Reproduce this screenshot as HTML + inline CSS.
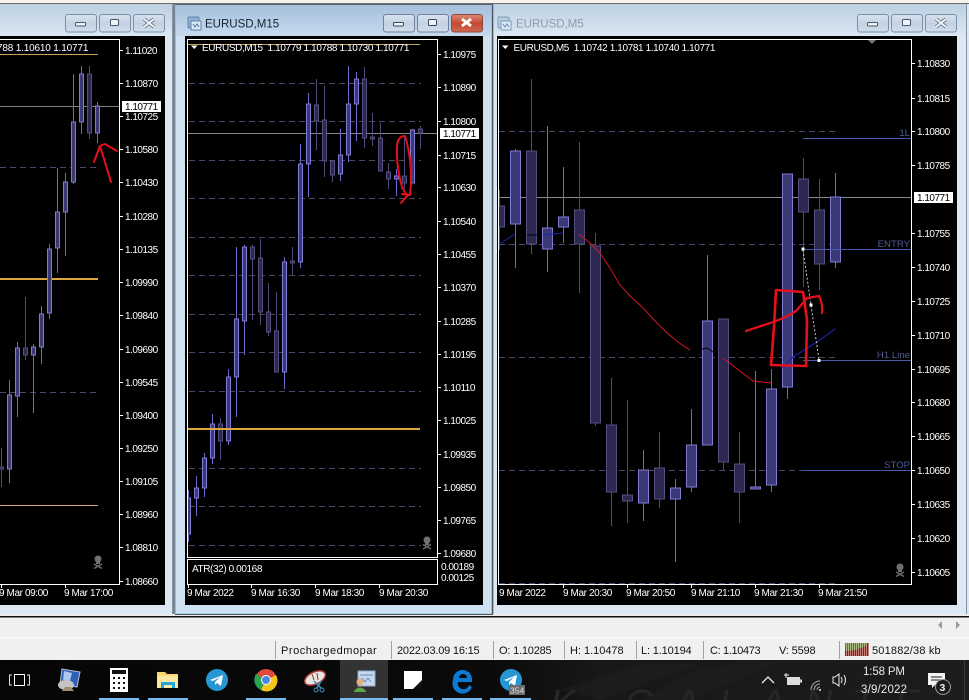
<!DOCTYPE html>
<html><head><meta charset="utf-8"><style>
html,body{margin:0;padding:0;background:#f0f0f0;overflow:hidden}
svg{display:block;font-family:"Liberation Sans",sans-serif}
.p{font-size:10px;fill:#fff;letter-spacing:-.5px}
.d{font-size:10px;fill:#fff;letter-spacing:-.4px}
.s{font-size:11px;fill:#111;letter-spacing:.35px}
.g{stroke:#4b4768;stroke-width:1;stroke-dasharray:6 4;fill:none}
.bw{stroke:#6e68cc;fill:none}.rw{stroke:#4f4a78;fill:none}
.bb{stroke:#7f7ad2;fill:#3b3876}.rb{stroke:#55507c;fill:#2c2852}
.w{stroke:#fff;fill:none}
.rd{stroke:#e80f1c;fill:none;stroke-linecap:round;stroke-linejoin:round}
</style></head><body>
<svg width="969" height="700" viewBox="0 0 969 700" xmlns="http://www.w3.org/2000/svg">
<defs>
<linearGradient id="ia" x1="0" y1="0" x2="0" y2="1"><stop offset="0" stop-color="#bccfe2"/><stop offset="1" stop-color="#dbe7f3"/></linearGradient>
<linearGradient id="ac" x1="0" y1="0" x2="0" y2="1"><stop offset="0" stop-color="#a5bfdb"/><stop offset="1" stop-color="#c6daee"/></linearGradient>
<linearGradient id="bt" x1="0" y1="0" x2="0" y2="1"><stop offset="0" stop-color="#d8e3ef"/><stop offset=".5" stop-color="#c3d2e2"/><stop offset="1" stop-color="#cfdeec"/></linearGradient>
<linearGradient id="cl" x1="0" y1="0" x2="0" y2="1"><stop offset="0" stop-color="#dd8a7c"/><stop offset=".5" stop-color="#c6482f"/><stop offset="1" stop-color="#cf6a54"/></linearGradient>
<linearGradient id="tb" x1="0" y1="0" x2="1" y2="0"><stop offset="0" stop-color="#060606"/><stop offset=".5" stop-color="#0a0a0a"/><stop offset=".62" stop-color="#181818"/><stop offset="1" stop-color="#1c1c1c"/></linearGradient>
<clipPath id="c3"><rect x="498" y="39" width="414" height="546"/></clipPath>
<clipPath id="c2"><rect x="187" y="39" width="251" height="519"/></clipPath>
<clipPath id="ct"><rect x="0" y="660" width="969" height="40"/></clipPath>
</defs>

<!-- top -->
<rect width="969" height="3" fill="#f6f3ee"/><rect y="3" width="969" height="1" fill="#6b6b6b"/>
<rect x="0" y="614" width="969" height="3" fill="#ececec"/>

<!-- window 1 -->
<rect x="0" y="4" width="172" height="610" fill="#dce8f4"/>
<rect x="0" y="4" width="172" height="32" fill="url(#ia)"/>
<rect x="0" y="36" width="165" height="569" fill="#000"/>
<path d="M172.500 4V614" stroke="#8795a3"/>
<g>
<rect x="65.500" y="14.500" width="31" height="17.500" rx="2.500" fill="url(#bt)" stroke="#7c90a6"/>
<rect x="99.500" y="14.500" width="31" height="17.500" rx="2.500" fill="url(#bt)" stroke="#7c90a6"/>
<rect x="133.500" y="14.500" width="31" height="17.500" rx="2.500" fill="url(#bt)" stroke="#7c90a6"/>
<rect x="75.500" y="22.500" width="10" height="3.500" rx="1" fill="#eef3f8" stroke="#4a5868"/>
<rect x="110.500" y="19.500" width="8" height="6" rx="1" fill="#eef3f8" stroke="#4a5868"/>
<path d="M144 19l10 8M154 19l-10 8" stroke="#5f6d7d" stroke-width="3.600"/><path d="M144 19l10 8M154 19l-10 8" stroke="#f4f7fa" stroke-width="2"/>
</g>
<path class="g" d="M0 167.500H98M0 392.500H98"/>
<path d="M0 54.500H98" stroke="#c9a15a"/><path d="M0 106.500H119" stroke="#808080"/>
<path d="M0 279H98" stroke="#d9a93e" stroke-width="2"/><path d="M0 505.500H98" stroke="#d9a57a"/>
<path class="bw" d="M73.500 74V184M81.500 66V134M97.500 102V143M65.500 173V256M57.500 168V273M49.500 244V319M41.500 306V364M33.500 344V413M17.500 342V417M9.500 380V483"/>
<path class="rw" d="M89.500 66V139M25.500 297V360M1.500 448V487"/>
<path class="bb" d="M71.500 122h4V182h-4zM79.500 74h4V122h-4zM95.500 106h4V133h-4zM63.500 182h4V212h-4zM55.500 212h4V248h-4zM47.500 249h4V313h-4zM39.500 314h4V347h-4zM31.500 347h4V355h-4zM15.500 348h4V396h-4zM7.500 395h4V469h-4z"/>
<path class="rb" d="M87.500 74h4V133h-4zM23.500 348h4V355h-4zM-.5 467h4V469h-4z"/>
<path class="rd" stroke-width="2" d="M94 162L100 146L111 182M100 146L105 144L110 147L117 151"/>
<path class="w" d="M0 39.500H119.500V584.500H0M1.500 585V588M65.500 585V588"/>
<path class="w" d="M120 50.500h3M120 83.500h3M120 116.500h3M120 149.500h3M120 182.500h3M120 216.500h3M120 249.500h3M120 282.500h3M120 315.500h3M120 349.500h3M120 382.500h3M120 415.500h3M120 448.500h3M120 481.500h3M120 514.500h3M120 547.500h3M120 581.500h3"/>
<g class="p">
<text x="125" y="54">1.11020</text><text x="125" y="87">1.10870</text><text x="125" y="120">1.10725</text><text x="125" y="153">1.10580</text><text x="125" y="186">1.10430</text><text x="125" y="220">1.10280</text><text x="125" y="253">1.10135</text><text x="125" y="286">1.09990</text><text x="125" y="319">1.09840</text><text x="125" y="353">1.09690</text><text x="125" y="386">1.09545</text><text x="125" y="419">1.09400</text><text x="125" y="452">1.09250</text><text x="125" y="485">1.09105</text><text x="125" y="518">1.08960</text><text x="125" y="551">1.08810</text><text x="125" y="585">1.08660</text>
</g>
<rect x="122" y="101" width="39" height="11" fill="#fff"/><text class="p" x="125" y="110" style="fill:#000">1.10771</text>
<text class="d" x="-3" y="51" textLength="91">788 1.10610 1.10771</text>
<text class="d" x="-1" y="596">9 Mar 09:00</text><text class="d" x="64" y="596">9 Mar 17:00</text>
<g fill="#707070"><circle cx="98" cy="559" r="3.500"/><rect x="96" y="561" width="4" height="3"/><path d="M94 564l8 4.500M102 564l-8 4.500" stroke="#707070" stroke-width="1.300"/></g>

<!-- window 3 -->
<rect x="493" y="4" width="476" height="610" fill="#dce8f4"/>
<rect x="493" y="4" width="474" height="32" fill="url(#ia)"/>
<path d="M966.500 4V614" stroke="#8795a3"/><path d="M493.500 4V614" stroke="#7fc0e0"/>
<rect x="497" y="36" width="460" height="569" fill="#000"/>
<g transform="translate(498,17)"><rect width="11" height="11" rx="1" fill="#b8cde2" stroke="#7f9cb8"/><rect x="3" y="4" width="10" height="9" fill="#dce8f3" stroke="#7f9cb8"/><path d="M5 7l2 3 2-3 2 3" stroke="#6f8fb0" fill="none"/></g>
<text x="516" y="27.500" style="font-size:11.500px;fill:#8d9cab">EURUSD,M5</text>
<g>
<rect x="857.500" y="14.500" width="31" height="17.500" rx="2.500" fill="url(#bt)" stroke="#7c90a6"/>
<rect x="891.500" y="14.500" width="31" height="17.500" rx="2.500" fill="url(#bt)" stroke="#7c90a6"/>
<rect x="925.500" y="14.500" width="31" height="17.500" rx="2.500" fill="url(#bt)" stroke="#7c90a6"/>
<rect x="867.500" y="22.500" width="10" height="3.500" rx="1" fill="#eef3f8" stroke="#4a5868"/>
<rect x="902.500" y="19.500" width="8" height="6" rx="1" fill="#eef3f8" stroke="#4a5868"/>
<path d="M936 19l10 8M946 19l-10 8" stroke="#5f6d7d" stroke-width="3.600"/><path d="M936 19l10 8M946 19l-10 8" stroke="#f4f7fa" stroke-width="2"/>
</g>
<g clip-path="url(#c3)">
<path class="g" d="M499 131.500H837M499 244.500H837M499 357.500H837M499 470.500H837M499 583.500H837"/>
<path d="M498 197.500H911" stroke="#8a8a8a"/>
<path class="bw" d="M515.500 149V268M547.500 126V272M563.500 167V243M643.500 450V521M675.500 479V562M691.500 409V492M707.500 255V445M755.500 371V489M771.500 369V492M787.500 174V399M835.500 173V268"/>
<path class="rw" d="M499.500 190V250M531.500 79V254M579.500 142V293M595.500 233V426M611.500 378V526M627.500 400V523M659.500 432V508M723.500 319V471M739.500 432V523M803.500 158V287M819.500 179V290"/>
<path class="bb" d="M510.500 151h10V224h-10zM542.500 228h10V249h-10zM558.500 217h10V227h-10zM638.500 470h10V503h-10zM670.500 488h10V499h-10zM686.500 445h10V487h-10zM702.500 321h10V445h-10zM750.500 487h10V489h-10zM766.500 389h10V485h-10zM782.500 174h10V387h-10zM830.500 197h10V262h-10z"/>
<path class="rb" d="M494.500 206h10V227h-10zM526.500 151h10V244h-10zM574.500 210h10V244h-10zM590.500 246h10V423h-10zM606.500 425h10V492h-10zM622.500 495h10V501h-10zM654.500 468h10V499h-10zM718.500 319h10V462h-10zM734.500 464h10V492h-10zM798.500 179h10V212h-10zM814.500 210h10V264h-10z"/>
<path d="M498 245L515 234" stroke="#1c22a8" fill="none"/><path d="M527 235H537" stroke="#000" fill="none"/><path d="M543 235L563 233" stroke="#1c22a8" fill="none"/>
<path d="M579 234L590 243L600 253L610 268L620 285L630 296L643 308L655 321L667 333L678 342L690 350" stroke="#d8142a" fill="none"/>
<path d="M702 349L707 348L713 352" stroke="#000" fill="none"/>
<path d="M723 358L753 381L771 383" stroke="#d8142a" fill="none"/>
<path d="M783 368L793 357L817 342L835 329" stroke="#1a20a8" fill="none" stroke-width="1.200"/>
<path d="M803 138.500H911M803 249.500H911M803 360.500H911M803 470.500H911" stroke="#4659ad" fill="none"/>
<path d="M803 250L811 305L819 360" stroke="#ccc" fill="none" stroke-dasharray="2 2"/>
<rect x="801.500" y="247.500" width="3" height="3" fill="#fff"/><rect x="809.500" y="303.500" width="3" height="3" fill="#fff"/><rect x="817.500" y="359" width="3" height="3" fill="#fff"/>
</g>
<g style="font-size:9.600px;fill:#4d5e98" text-anchor="end"><text x="910" y="136">1L</text><text x="910" y="247">ENTRY</text><text x="910" y="358">H1 Line</text><text x="910" y="468">STOP</text></g>
<path class="rd" stroke-width="2.600" d="M776 290L803 292L807 320L806 366L771 365L774 327Z"/>
<path class="rd" stroke-width="2.200" d="M746 331L773 322Q790 316 797 310L807 298L819 296Q823 304 822 313"/>
<path d="M868 40l4 4 4-4z" fill="#777"/>
<path class="w" d="M498.500 39.500H911.500V584.500H498.500Z"/>
<path class="w" d="M563.500 585V588M627.500 585V588M691.500 585V588M755.500 585V588M819.500 585V588M912 63.500h3M912 98.500h3M912 131.500h3M912 165.500h3M912 233.500h3M912 267.500h3M912 301.500h3M912 335.500h3M912 369.500h3M912 402.500h3M912 436.500h3M912 470.500h3M912 504.500h3M912 538.500h3M912 572.500h3"/>
<g class="p"><text x="917" y="67">1.10830</text><text x="917" y="102">1.10815</text><text x="917" y="135">1.10800</text><text x="917" y="169">1.10785</text><text x="917" y="237">1.10755</text><text x="917" y="271">1.10740</text><text x="917" y="305">1.10725</text><text x="917" y="339">1.10710</text><text x="917" y="373">1.10695</text><text x="917" y="406">1.10680</text><text x="917" y="440">1.10665</text><text x="917" y="474">1.10650</text><text x="917" y="508">1.10635</text><text x="917" y="542">1.10620</text><text x="917" y="576">1.10605</text></g>
<rect x="914" y="192" width="39" height="11" fill="#fff"/><text class="p" x="917" y="201" style="fill:#000">1.10771</text>
<path d="M502 45.500h6.500l-3.200 3.500z" fill="#fff"/>
<text class="d" x="513.500" y="51" textLength="201.500" xml:space="preserve">EURUSD,M5  1.10742 1.10781 1.10740 1.10771</text>
<g class="d"><text x="499" y="596">9 Mar 2022</text><text x="563" y="596">9 Mar 20:30</text><text x="626" y="596">9 Mar 20:50</text><text x="691" y="596">9 Mar 21:10</text><text x="754" y="596">9 Mar 21:30</text><text x="818" y="596">9 Mar 21:50</text></g>
<g fill="#707070"><circle cx="900" cy="567" r="3.500"/><rect x="898" y="569" width="4" height="3"/><path d="M896 572l8 4.500M904 572l-8 4.500" stroke="#707070" stroke-width="1.300"/></g>

<!-- window 2 -->
<rect x="173" y="4" width="2" height="610" fill="#77838e"/>
<rect x="175" y="5" width="317" height="609" fill="#cfe0f1"/>
<rect x="175" y="5" width="317" height="31" fill="url(#ac)"/>
<path d="M175.500 5V614H491.500V5" fill="none" stroke="#8cc6e6"/><path d="M175 4.500H492" stroke="#5a6570"/>
<path d="M492.500 4V614M175 614.500H493" fill="none" stroke="#4a555f"/>
<rect x="185" y="36" width="298" height="569" fill="#000"/>
<g transform="translate(188,17)"><rect width="11" height="11" rx="1" fill="#8fb0d0" stroke="#5f83a8"/><rect x="3" y="4" width="10" height="9" fill="#dce8f3" stroke="#5f83a8"/><path d="M5 7l2 3 2-3 2 3" stroke="#4f7aa5" fill="none"/></g>
<text x="205" y="27.500" style="font-size:11.500px;fill:#15222e">EURUSD,M15</text>
<g>
<rect x="383.500" y="14.500" width="31" height="17.500" rx="2.500" fill="url(#bt)" stroke="#6d8199"/>
<rect x="417.500" y="14.500" width="31" height="17.500" rx="2.500" fill="url(#bt)" stroke="#6d8199"/>
<rect x="451.500" y="14.500" width="31" height="17.500" rx="2.500" fill="url(#cl)" stroke="#8a4a40"/>
<rect x="393.500" y="22.500" width="10" height="3.500" rx="1" fill="#eef3f8" stroke="#3c4a5a"/>
<rect x="428.500" y="19.500" width="8" height="6" rx="1" fill="#eef3f8" stroke="#3c4a5a"/>
<path d="M462 19l9 7M471 19l-9 7" stroke="#fff" stroke-width="3"/>
</g>
<g clip-path="url(#c2)">
<path class="g" d="M189 83.500H421M189 121.500H421M189 160.500H421M189 198.500H421M189 237.500H421M189 275.500H421M189 314.500H421M189 352.500H421M189 391.500H421M189 468.500H421M189 506.500H421M189 545.500H421"/>
<path d="M188 133.500H437" stroke="#888"/>
<path d="M188 44.500H420" stroke="#c9a15a"/>
<path class="bw" d="M188.500 490V542M196.500 476V516M204.500 453V497M212.500 414V464M228.500 369V445M236.500 247V417M244.500 245V355M284.500 257V389M300.500 144V268M308.500 93V197M340.500 129V181M348.500 66V162M356.500 72V141M396.500 169V196M412.500 129V183"/>
<path class="rw" d="M220.500 418V460M252.500 245V320M260.500 239V325M268.500 283V336M276.500 292V372M292.500 247V275M316.500 79V150M324.500 86V177M332.500 160V182M364.500 67V148M372.500 113V146M380.500 123V171M388.500 163V189M404.500 136V189M420.500 126V149"/>
<path class="bb" d="M186.500 498h4V534h-4zM194.500 488h4V498h-4zM202.500 458h4V488h-4zM210.500 424h4V458h-4zM226.500 377h4V441h-4zM234.500 319h4V377h-4zM242.500 247h4V321h-4zM282.500 262h4V372h-4zM298.500 164h4V262h-4zM306.500 104h4V164h-4zM338.500 155h4V174h-4zM346.500 104h4V155h-4zM354.500 79h4V104h-4zM394.500 176h4V179h-4zM410.500 130h4V183h-4z"/>
<path class="rb" d="M218.500 424h4V441h-4zM250.500 247h4V259h-4zM258.500 258h4V312h-4zM266.500 312h4V332h-4zM274.500 331h4V372h-4zM290.500 261h4V263h-4zM314.500 105h4V121h-4zM322.500 120h4V161h-4zM330.500 161h4V175h-4zM362.500 79h4V138h-4zM370.500 137h4V139h-4zM378.500 138h4V171h-4zM386.500 172h4V179h-4zM402.500 176h4V183h-4zM418.500 129h4V133h-4z"/>
<path d="M188 429H420" stroke="#d9a93e" stroke-width="2"/>
</g>
<path class="rd" stroke-width="2" d="M405 136Q398 136 397 146Q396 165 402 187Q406 195 408 195L401 203M405 136Q408 145 410 160Q412 180 410 195L402 194"/>
<path class="w" d="M187.500 39.500H437.500V557.500H187.500ZM187.500 559.500H437.500V584.500H187.500Z"/>
<path class="w" d="M251.500 585V588M315.500 585V588M379.500 585V588M188.500 585V588M438 54.500h3M438 87.500h3M438 121.500h3M438 155.500h3M438 187.500h3M438 221.500h3M438 254.500h3M438 287.500h3M438 321.500h3M438 354.500h3M438 387.500h3M438 420.500h3M438 454.500h3M438 487.500h3M438 520.500h3M438 553.500h3"/>
<g class="p"><text x="443" y="58">1.10975</text><text x="443" y="91">1.10890</text><text x="443" y="125">1.10800</text><text x="443" y="159">1.10715</text><text x="443" y="191">1.10630</text><text x="443" y="225">1.10540</text><text x="443" y="258">1.10455</text><text x="443" y="291">1.10370</text><text x="443" y="325">1.10285</text><text x="443" y="358">1.10195</text><text x="443" y="391">1.10110</text><text x="443" y="424">1.10025</text><text x="443" y="458">1.09935</text><text x="443" y="491">1.09850</text><text x="443" y="524">1.09765</text><text x="443" y="557">1.09680</text><text x="441" y="570">0.00189</text><text x="441" y="581">0.00125</text></g>
<rect x="440" y="128" width="39" height="11" fill="#fff"/><text class="p" x="443" y="137" style="fill:#000">1.10771</text>
<path d="M191 45.500h6.500l-3.200 3.500z" fill="#fff"/>
<text class="d" x="202" y="51" textLength="207" xml:space="preserve">EURUSD,M15  1.10779 1.10788 1.10730 1.10771</text>
<text class="d" x="192" y="572" textLength="70">ATR(32) 0.00168</text>
<g class="d"><text x="187" y="596">9 Mar 2022</text><text x="251" y="596">9 Mar 16:30</text><text x="315" y="596">9 Mar 18:30</text><text x="379" y="596">9 Mar 20:30</text></g>
<g fill="#707070"><circle cx="427" cy="540" r="3.500"/><rect x="425" y="542" width="4" height="3"/><path d="M423 544.500l8 4.500M431 544.500l-8 4.500" stroke="#707070" stroke-width="1.300"/></g>

<!-- tabs and status bar -->
<rect x="0" y="616" width="969" height="1.500" fill="#111"/>
<rect x="0" y="617.500" width="969" height="22.500" fill="#f0f0f0"/>
<rect x="0" y="637" width="969" height="1" fill="#fafafa"/>
<rect x="0" y="638" width="969" height="22" fill="#f0f0f0"/>
<path d="M942 621l-4 4 4 4zM956 621l4 4-4 4z" fill="#9a9a9a"/>
<path d="M275.500 641V659M391.500 641V659M493.500 641V659M564.500 641V659M636.500 641V659M703.500 641V659M839.500 641V659" stroke="#a0a0a0"/>
<g class="s"><text x="281" y="654" textLength="96">Prochargedmopar</text><text x="397" y="654" textLength="83">2022.03.09 16:15</text><text x="499" y="654" textLength="53">O: 1.10285</text><text x="570" y="654" textLength="54">H: 1.10478</text><text x="641" y="654" textLength="51">L: 1.10194</text><text x="710" y="654" textLength="51">C: 1.10473</text><text x="779" y="654" textLength="37">V: 5598</text><text x="872" y="654" textLength="69">501882/38 kb</text></g>
<g stroke-width="1.500">
<path d="M845.750 656V651M847.750 656V651M849.750 656V651M851.750 656V650M853.750 656V650M855.750 656V650M857.750 656V649M859.750 656V648M861.750 656V648M863.750 656V647M865.750 656V646M867.750 656V643" stroke="#a01408"/>
<path d="M845.750 651V643M847.750 651V643M849.750 651V643M851.750 650V643M853.750 650V643M855.750 650V643M857.750 649V643M859.750 648V643M861.750 648V643M863.750 647V643M865.750 646V643" stroke="#5f7d10"/>
</g>

<!-- taskbar -->
<rect x="0" y="660" width="969" height="40" fill="url(#tb)"/>
<path d="M560 690L640 664L700 664L600 700ZM640 700L700 668L780 662L690 700Z" fill="#222" opacity=".45"/>
<g clip-path="url(#ct)"><text x="550" y="716" textLength="370" style="font-size:38px;font-style:italic;fill:#272727">K GALANTE</text></g>
<rect x="340" y="660" width="48" height="40" fill="#333"/>
<path d="M99 699H139M148 699H188M246 699H286M340 699H388M393 699H433M442 699H482M490 699H531" stroke="#76b9ed" stroke-width="2"/>
<!-- task view -->
<rect x="14.500" y="674.500" width="10" height="11" fill="none" stroke="#fff" stroke-width="1"/><path d="M12 675h-2.500v10H12M27 675h2.500v10H27" fill="none" stroke="#ddd"/>
<!-- computer -->
<g><path d="M62 669L80 672L77 687L60 684Z" fill="#2f5fb8" stroke="#b8c0cc"/><path d="M64 671l8 2-2 8-7-1z" fill="#a8c8ee"/><ellipse cx="66" cy="685" rx="8" ry="5" fill="#c4c4c4"/><path d="M62 691h12l-3-4h-6z" fill="#9a8f70"/></g>
<!-- calculator -->
<rect x="110" y="668" width="18" height="24" fill="#fff"/><rect x="112" y="670" width="14" height="4" fill="#111"/>
<path d="M113 677h2v2h-2zM118 677h2v2h-2zM123 677h2v2h-2zM113 682h2v2h-2zM118 682h2v2h-2zM123 682h2v2h-2zM113 687h2v2h-2zM118 687h2v2h-2zM123 687h2v2h-2z" fill="#111"/>
<!-- folder -->
<path d="M157 672h8l2 2h11v14h-21z" fill="#f7d774"/><path d="M157 676h21v12h-21z" fill="#fbe6a0"/><path d="M161 682h14v6h-3v-3h-8v3h-3z" fill="#27a2db"/>
<!-- telegram -->
<circle cx="217" cy="680" r="11" fill="#2797d3"/><path d="M210 680l13-5-2 11-4-3-2 2v-3l5-5-7 4z" fill="#fff"/>
<!-- chrome -->
<circle cx="266" cy="680" r="11" fill="#dd4b3e"/><path d="M266 680L256 674A11 11 0 0 0 261 690Z" fill="#2ba24c"/><path d="M266 680L261 690A11 11 0 0 0 276 675Z" fill="#f5c518"/><path d="M266 680L276 675H266Z" fill="#dd4b3e"/><circle cx="266" cy="680" r="5" fill="#fff"/><circle cx="266" cy="680" r="4" fill="#4a86e8"/>
<!-- snip -->
<ellipse cx="315" cy="678" rx="11" ry="6" transform="rotate(-25 315 678)" fill="#e9e4df" stroke="#b03a3a" stroke-width="1.500"/><path d="M312 674l2 6M317 673l1 7" stroke="#8a3a3a"/><path d="M314 681l7 7M321 681l-4 7" stroke="#3f8fc0" stroke-width="1.500"/><circle cx="322" cy="690" r="2" fill="none" stroke="#3f8fc0"/><circle cx="316" cy="690" r="2" fill="none" stroke="#3f8fc0"/>
<!-- mt4 -->
<g><rect x="358" y="671" width="17" height="15" fill="#c6d8ee" stroke="#90a8c4"/><path d="M360 675h13M362 678l3 4 3-4 3 4" stroke="#6c8cb8" fill="none"/><circle cx="360" cy="682" r="3.500" fill="#e4b080"/><path d="M354 691q6-7 12 0v1h-12z" fill="#5aa84a"/></g>
<!-- sticky -->
<rect x="404" y="671" width="18" height="18" fill="#fff"/><path d="M422 680v9h-9z" fill="#111"/>
<!-- edge -->
<path d="M453 680a9.500 9.500 0 0 1 19-1v3h-14a5 5 0 0 0 11 3l3 2a10 10 0 0 1-19-7zM459 678h8a4 4 0 0 0-8 0z" fill="#0b7ad4" fill-rule="evenodd"/>
<!-- telegram 2 -->
<circle cx="511" cy="680" r="11" fill="#2797d3"/><path d="M504 680l13-5-2 11-4-3-2 2v-3l5-5-7 4z" fill="#fff"/>
<rect x="509" y="685" width="16" height="10" fill="#6c6c6c"/><text x="510" y="693.500" style="font-size:8.500px;fill:#ddd">354</text>
<!-- tray -->
<path d="M762 683l6-6 6 6" fill="none" stroke="#eee" stroke-width="1.300"/>
<path d="M787 677h13v8h-13z" fill="#ddd"/><path d="M800 680h1.500v2H800zM784 675h5M786 673v5" stroke="#eee" fill="none"/>
<path d="M811 690a9 9 0 0 1 9-9M814 690a6 6 0 0 1 6-6M817 690a3 3 0 0 1 3-3" fill="none" stroke="#aaa"/><circle cx="820" cy="690" r="1" fill="#eee"/>
<path d="M833 677h2l4-3v12l-4-3h-2z" fill="none" stroke="#eee"/><path d="M841 677q2 3 0 6M844 675q3 5 0 10" fill="none" stroke="#eee"/>
<text x="863" y="675" style="font-size:11.500px;fill:#e8e8e8" textLength="42">1:58 PM</text>
<text x="861" y="693" style="font-size:11.500px;fill:#e8e8e8" textLength="46">3/9/2022</text>
<path d="M928 673h17v12h-10l-3 3v-3h-4z" fill="#f2f2f2"/><path d="M931 677h11M931 680h11" stroke="#222"/>
<circle cx="943" cy="687" r="7.500" fill="#1c1c1c" stroke="#999"/><text x="939.500" y="691" style="font-size:10.500px;font-weight:bold;fill:#eee">3</text>
<path d="M964.500 660V700" stroke="#3a3a3a"/>
</svg>
</body></html>
